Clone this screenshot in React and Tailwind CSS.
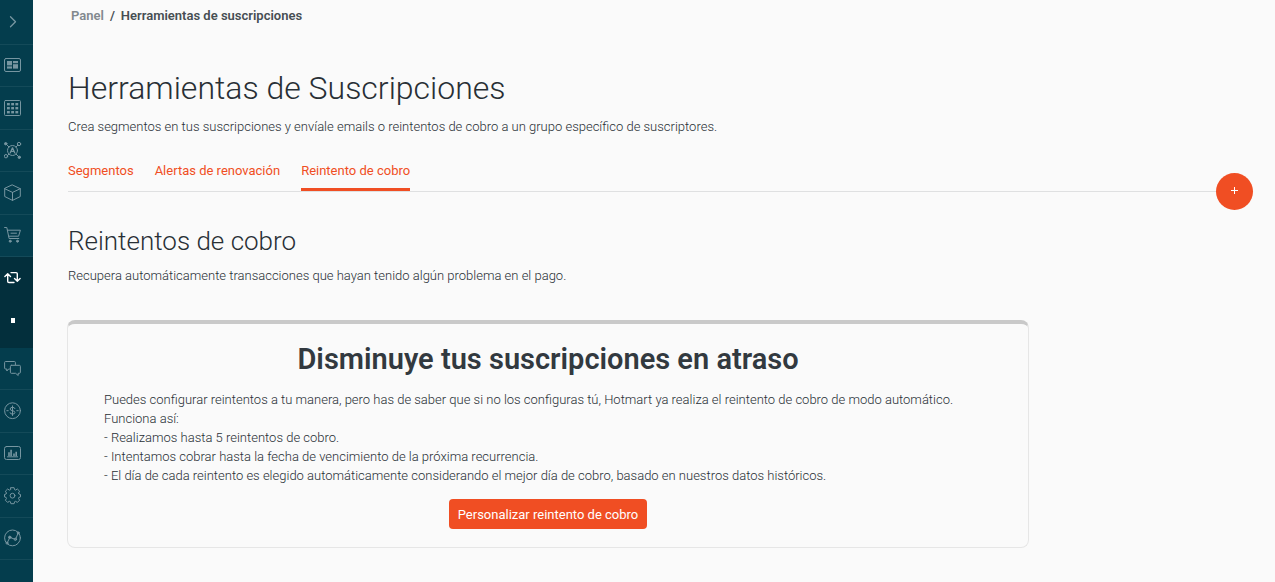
import React from "react";

function Icon({ children }) {
  return (
    <svg
      viewBox="0 0 18 18"
      className="h-[18px] w-[18px]"
      fill="none"
      stroke="currentColor"
      strokeWidth="1"
      strokeLinecap="round"
      strokeLinejoin="round"
      aria-hidden="true"
    >
      {children}
    </svg>
  );
}

const dashboard = (
  <>
    <rect x="0.5" y="1.5" width="16" height="13" rx="1.5" />
    <g fill="currentColor" stroke="none">
      <rect x="3" y="4" width="5" height="4.4" />
      <rect x="9" y="4" width="5" height="2.2" />
      <rect x="3" y="9.4" width="5" height="2.2" />
      <rect x="9" y="7.2" width="5" height="4.4" />
    </g>
  </>
);

const gridIcon = (
  <>
    <rect x="0.5" y="1.5" width="16" height="15" rx="1" />
    <g fill="currentColor" stroke="none">
      {[4, 8, 12].map((y) =>
        [3, 7.2, 11.4].map((x) => (
          <rect key={x + "-" + y} x={x} y={y} width="2.8" height="2.4" />
        ))
      )}
    </g>
  </>
);

const affiliates = (
  <>
    <circle cx="8.5" cy="9.5" r="5" />
    <path d="M6.3 11.8 8.5 6.8l2.2 5M7.1 10.3h2.8" strokeWidth="1.3" />
    <path d="M2 3 5 6M12 13l3 3M14 4l-2 2M5 13l-2 2" />
    <circle cx="1.7" cy="2.7" r="1.2" fill="currentColor" />
    <circle cx="15.3" cy="16.3" r="1.2" fill="currentColor" />
    <circle cx="15" cy="3" r="1.7" />
    <circle cx="2" cy="15.2" r="1.7" />
  </>
);

const box = (
  <>
    <path d="M8.5 1 16.3 4.7v7.8L8.5 16.4.7 12.5V4.7z" />
    <path d="M.7 4.7l7.8 3.7 7.8-3.7M8.5 8.4v8" />
  </>
);

const cart = (
  <>
    <path d="M.6 1.5h2.2l2.3 11h9.7M3.4 4.2h13l-1.8 6H4.8" />
    <path d="M7 7.2h5.5" />
    <circle cx="6.2" cy="15.2" r="1" fill="currentColor" />
    <circle cx="13.5" cy="15.2" r="1" fill="currentColor" />
  </>
);

const repeat = (
  <g strokeWidth="1.4">
    <path d="M.9 7.5 3.7 4.7 6.5 7.5M3.7 5v7.3q0 1.2 1.2 1.2H10" />
    <path d="M7 3.6h5.1q1.2 0 1.2 1.2v7.3M10.5 9.5l2.8 2.8 2.8-2.8" />
  </g>
);

const chat = (
  <>
    <path d="M5.5 9H4.6L2.8 11V9H1.6Q.6 9 .6 8V2.5q0-1 1-1h8.8q1 0 1 1v2.2" />
    <path d="M7.4 5.3h8q1 0 1 1v6q0 1-1 1h-1.2v2.2l-2.6-2.2H7.4q-1 0-1-1v-6q0-1 1-1z" />
  </>
);

const money = (
  <>
    <circle cx="8.5" cy="8.7" r="7.9" />
    <path d="M11 6.6Q10.7 5.3 8.5 5.3T6.1 7Q6.1 8.4 8.5 8.7t2.4 1.8q0 1.6-2.4 1.6T6 10.7M8.5 3.9v9.6M2.8 8.7h1.4M12.8 8.7h1.4" />
  </>
);

const chart = (
  <>
    <rect x="0.5" y="2.5" width="16" height="13" rx="2" />
    <path d="M3.5 12.8h10" />
    <path d="M5 12V8.2M7.1 12V5.8M10 12v-2.5M12.2 12V7.8" strokeWidth="1.6" strokeLinecap="butt" />
  </>
);

const gear = (
  <>
    <path d="M6.9.7h3.2l.5 2 1 .4 1.8-1.1 2.2 2.2-1.1 1.8.4 1 1.6.5v2.4l-1.6.5-.4 1 1.1 1.8-2.2 2.2-1.8-1.1-1 .4-.5 2H6.9l-.5-2-1-.4-1.8 1.1-2.2-2.2 1.1-1.8-.4-1-1.6-.5V7.5L2.1 7l.4-1-1.1-1.8L3.6 2l1.8 1.1 1-.4z" />
    <circle cx="8.5" cy="8.7" r="2.4" />
  </>
);

const analytics = (
  <>
    <circle cx="8.5" cy="8.9" r="7.9" />
    <path d="M3.2 13.9 5.8 8.4l5.7 2 2.6-6.2" />
    <circle cx="5.8" cy="8.3" r="1.2" fill="currentColor" />
    <circle cx="11.4" cy="10.3" r="1.2" />
    <circle cx="14.2" cy="3.9" r="1" fill="currentColor" />
    <circle cx="3" cy="14.1" r="1" />
  </>
);

const topItems = [
  ["Panel", dashboard],
  ["Aplicaciones", gridIcon],
  ["Afiliados", affiliates],
  ["Productos", box],
  ["Ventas", cart],
];

const bottomItems = [
  ["Mensajes", chat],
  ["Finanzas", money],
  ["Informes", chart],
  ["Ajustes", gear],
  ["Análisis", analytics],
];

function NavGroup({ items }) {
  return (
    <ul className="grid h-[212px] shrink-0 grid-rows-5">
      {items.map(([label, icon]) => (
        <li key={label} className="border-b border-[#144a59]">
          <a href="#" aria-label={label} className="flex h-full items-center pl-1">
            <Icon>{icon}</Icon>
          </a>
        </li>
      ))}
    </ul>
  );
}

function Sidebar() {
  return (
    <nav aria-label="Principal" className="flex w-[33px] shrink-0 flex-col bg-[#043d4d] text-[#7796a1]">
      <button
        type="button"
        aria-label="Expandir menú"
        className="flex h-[45px] shrink-0 items-center border-b border-[#144a59] pl-1"
      >
        <Icon>
          <path d="M6.5 3.8 11.5 8.8l-5 5" strokeWidth="1.3" />
        </Icon>
      </button>
      <NavGroup items={topItems} />
      <div className="flex h-[91px] shrink-0 flex-col bg-[#032f3c] text-white">
        <a href="#" aria-label="Suscripciones" className="flex h-[42px] items-center pl-1">
          <Icon>{repeat}</Icon>
        </a>
        <a href="#" aria-label="Herramientas" className="flex h-[43px] items-center pl-[11px]">
          <span className="h-[5px] w-1 bg-white" />
        </a>
      </div>
      <NavGroup items={bottomItems} />
    </nav>
  );
}

const tabs = ["Segmentos", "Alertas de renovación", "Reintento de cobro"];

function Tabs() {
  return (
    <div className="mt-[22px] flex items-start">
      <div role="tablist" className="flex flex-1 gap-[21px] border-b border-[#dfe0e1] text-[#f04e23]">
        {tabs.map((tab, i) => (
          <button
            key={tab}
            type="button"
            role="tab"
            aria-selected={i === 2}
            className={
              i === 2
                ? "h-[33px] border-b-[3px] border-[#f04e23] pb-[5px]"
                : "h-[33px] border-b-[3px] border-transparent pb-[5px]"
            }
          >
            {tab}
          </button>
        ))}
      </div>
      <button
        type="button"
        aria-label="Agregar"
        className="mt-[15px] -mb-5 flex h-[37px] w-[37px] items-center justify-center rounded-full bg-[#f04e23] text-white"
      >
        <svg viewBox="0 0 9 9" className="mb-[3px] h-[9px] w-[9px]" stroke="currentColor" strokeWidth="1" aria-hidden="true">
          <path d="M4.5 1v7M1 4.5h7" />
        </svg>
      </button>
    </div>
  );
}

export default function App() {
  return (
    <div className="flex min-h-screen bg-[#fafafa] font-['Roboto','Liberation_Sans',sans-serif] text-[13px] leading-[19px] text-[#282f35]">
      <Sidebar />
      <main className="min-w-0 flex-1 pr-[22px] pl-[35px]">
        <nav aria-label="Ruta" className="flex gap-[6px] pt-[6px] pl-[3px] font-semibold text-[#464e53]">
          <a href="#" className="text-[#82898e]">Panel</a>
          <span>/</span>
          <span>Herramientas de suscripciones</span>
        </nav>

        <h1 className="mt-[43px] text-[32px] leading-10 font-light">Herramientas de Suscripciones</h1>
        <p className="mt-[9px] font-light">
          Crea segmentos en tus suscripciones y envíale emails o reintentos de cobro a un grupo específico de suscriptores.
        </p>

        <Tabs />

        <section>
          <h2 className="mt-[33px] text-[26px] leading-8 font-light">Reintentos de cobro</h2>
          <p className="mt-[9px] font-light">
            Recupera automáticamente transacciones que hayan tenido algún problema en el pago.
          </p>

          <article className="mt-[35px] -ml-px w-full max-w-[962px] rounded-lg border border-t-4 border-[#e6e6e6] border-t-[#c9c9c9] px-9 pt-[17px] pb-[18px]">
            <h3 className="text-center text-[29px] leading-9 font-semibold text-[#32393f]">Disminuye tus suscripciones en atraso</h3>
            <p className="mt-[13px] font-light">
              Puedes configurar reintentos a tu manera, pero has de saber que si no los configuras tú, Hotmart ya realiza el reintento de cobro de modo automático.
              <br />
              Funciona así:
              <br />- Realizamos hasta 5 reintentos de cobro.
              <br />- Intentamos cobrar hasta la fecha de vencimiento de la próxima recurrencia.
              <br />- El día de cada reintento es elegido automáticamente considerando el mejor día de cobro, basado en nuestros datos históricos.
            </p>
            <div className="mt-[14px] flex justify-center">
              <button type="button" className="h-[30px] rounded bg-[#f04e23] px-[9px] text-white">
                Personalizar reintento de cobro
              </button>
            </div>
          </article>
        </section>
      </main>
    </div>
  );
}
